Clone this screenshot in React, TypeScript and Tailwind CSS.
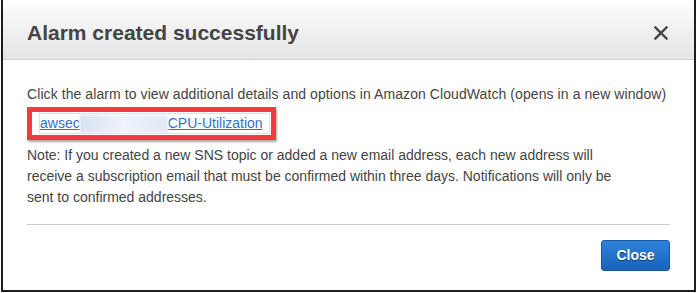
import React from 'react';

const App: React.FC = () => {
    return (
        <div className="w-[697px] h-[293px] bg-white" style={{ fontFamily: '"Liberation Sans", Arial, sans-serif' }}>
            <div className="ml-[1px] w-[695px] h-[292px] flex flex-col pt-[7px] border-l-2 border-r-2 border-b-2 border-[#1e1e1e] bg-white">
                {/* header */}
                <div className="h-[53px] flex items-center justify-between pl-[24px] pr-[26px] bg-gradient-to-b from-[#fafafa] to-[#e5e5e5] border-b border-[#cfcfcf]">
                    <h1 className="text-[21px] font-bold text-[#444] leading-none pb-[2px]">Alarm created successfully</h1>
                    <svg width="14" height="14" viewBox="0 0 14 14" className="text-[#444]">
                        <path d="M1.5 1.5 L12.5 12.5 M12.5 1.5 L1.5 12.5" stroke="currentColor" strokeWidth="2.4" strokeLinecap="square" />
                    </svg>
                </div>

                {/* body */}
                <div className="flex flex-col px-[24px] pt-[24px] text-[14px] leading-[21px] text-[#444]">
                    <p className="tracking-[0.08px]">Click the alarm to view additional details and options in Amazon CloudWatch (opens in a new window)</p>
                    <div className="mt-[2px] w-[249px] h-[33px] border-[5px] border-[#f03c40] shadow-[1px_2px_2px_rgba(0,0,0,0.35)] flex items-center pl-[7px]">
                        <div className="flex items-center h-[21px] pr-[6px] border border-[#d8e2ee]">
                            <a href="#" className="text-[#2f6fcf] underline">awsec</a>
                            <span className="inline-block w-[88px] h-[18px] bg-gradient-to-r from-[#d5e3f4] via-[#eef3fa] to-[#dfe9f5] blur-[1.5px]" />
                            <a href="#" className="text-[#2f6fcf] underline">CPU-Utilization</a>
                        </div>
                    </div>
                    <p className="mt-[5px] w-[585px]">
                        Note: If you created a new SNS topic or added a new email address, each new address will receive a subscription email that must be confirmed within three days. Notifications will only be sent to confirmed addresses.
                    </p>
                    <div className="mt-[16px] h-px w-[643px] bg-[#cccccc]" />
                    <div className="flex justify-end w-[643px] mt-[15px]">
                        <button className="w-[69px] h-[31px] rounded-[3px] border border-[#1858a8] bg-gradient-to-b from-[#2e82d8] to-[#1a64bb] text-white font-bold text-[14px] [text-shadow:0_1px_1px_rgba(0,0,0,0.5)]">
                            Close
                        </button>
                    </div>
                </div>
            </div>
        </div>
    );
};

export default App;
